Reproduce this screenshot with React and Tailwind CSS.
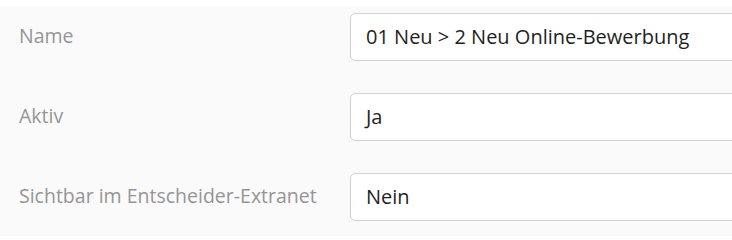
import React from "react";

const fields = [
  { label: "Name", value: "01 Neu > 2 Neu Online-Bewerbung" },
  { label: "Aktiv", value: "Ja" },
  { label: "Sichtbar im Entscheider-Extranet", value: "Nein" },
];

export default function App() {
  return (
    <div
      className="h-[236px] w-[732px] overflow-hidden bg-white pt-[7px]"
      style={{ fontFamily: '"Open Sans", "Noto Sans", sans-serif' }}
    >
      <div className="flex h-full flex-col gap-[32px] bg-[#fafafa] pt-[6px] pl-[19px]">
        {fields.map((f) => (
          <div key={f.label} className="flex items-center">
            <div className="w-[331px] shrink-0 pb-[3px] text-[19.5px] leading-none text-[#959595]">
              {f.label}
            </div>
            <div className="-mr-[10px] flex h-[48px] flex-1 items-center rounded-[5px] border border-[#d2d2d2] bg-white pl-[15px] text-[20px] leading-none text-[#1f1f1f]">
              {f.value}
            </div>
          </div>
        ))}
      </div>
    </div>
  );
}
